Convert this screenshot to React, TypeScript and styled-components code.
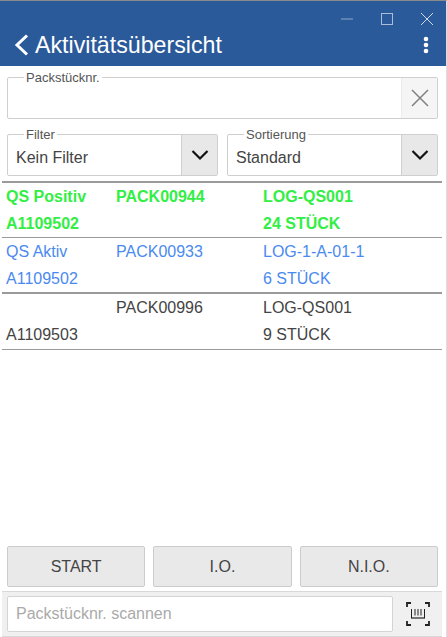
import React from 'react';
import styled, { createGlobalStyle } from 'styled-components';

const GlobalStyle = createGlobalStyle`
  html, body {
    margin: 0;
    padding: 0;
    background: #ffffff;
  }
  body {
    font-family: 'Liberation Sans', Arial, sans-serif;
    color: #444444;
  }
`;

const Page = styled.div`
  width: 447px;
  height: 637px;
  display: flex;
  flex-direction: column;
  overflow: hidden;
  background: #fff;
  border-top: 1px solid #8a8a8a;
  border-right: 1px solid #dddddd;
  box-sizing: border-box;
`;

const Header = styled.header`
  background: #2a5a99;
  height: 65px;
  flex-shrink: 0;
  display: flex;
  flex-direction: column;
  padding: 0 3px 0 14px;
  color: #fff;
`;

const WindowBar = styled.div`
  height: 30px;
  display: flex;
  justify-content: flex-end;
  align-items: center;
  padding-top: 6px;
  gap: 26px;
  padding-right: 9px;
  box-sizing: border-box;
`;

const TitleBar = styled.div`
  display: flex;
  align-items: center;
  height: 28px;
  padding-right: 11px;
`;

const Title = styled.h1`
  flex: 1;
  margin: 0 0 0 6px;
  font-size: 23.2px;
  font-weight: 400;
  color: #fff;
  font-family: 'Liberation Sans', Arial, sans-serif;
`;

const Content = styled.main`
  flex: 1;
  display: flex;
  flex-direction: column;
  padding: 0 4px 0 2px;
  min-height: 0;
`;

const FieldRow = styled.div<{ $top: number }>`
  display: flex;
  gap: 9px;
  padding: 0 4px 0 5px;
  margin-top: ${(p) => p.$top}px;
`;

const Field = styled.div`
  position: relative;
  flex: 1;
  height: 42px;
  box-sizing: border-box;
  border: 1px solid #cfcfcf;
  border-radius: 2px;
  display: flex;
  background: #fff;
`;

const Legend = styled.span`
  position: absolute;
  top: -8px;
  left: 16px;
  padding: 0 2px;
  background: #fff;
  font-size: 13px;
  line-height: 15px;
  color: #555;
`;

const FieldValue = styled.div`
  flex: 1;
  padding: 13px 0 0 8px;
  font-size: 16px;
  line-height: 20px;
  color: #444;
`;

const FieldButton = styled.div<{ $light?: boolean }>`
  width: 35px;
  flex-shrink: 0;
  display: flex;
  align-items: center;
  justify-content: center;
  background: ${(p) => (p.$light ? '#f5f5f5' : '#e8e8e8')};
  border-left: 1px solid ${(p) => (p.$light ? '#ececec' : '#cfcfcf')};
`;

const List = styled.div`
  margin-top: 5px;
  padding: 0;
  flex: 1;
  border-top: 2px solid #9a9a9a;
`;

const Row = styled.div<{ $color: string; $bold?: boolean; $thick?: boolean; $height: number }>`
  display: grid;
  grid-template-columns: 110px 147px 1fr;
  grid-auto-rows: 27px;
  padding: 0 0 0 4px;
  height: ${(p) => p.$height}px;
  box-sizing: border-box;
  border-bottom: ${(p) => (p.$thick ? 2 : 1)}px solid #9a9a9a;
  color: ${(p) => p.$color};
  font-weight: ${(p) => (p.$bold ? 700 : 400)};
  font-size: 16px;
  line-height: 27px;
`;

const Cell = styled.span`
  white-space: nowrap;
`;

const Actions = styled.div`
  display: flex;
  gap: 8px;
  padding: 0 4px 4px 5px;
  border-bottom: 1px solid #d8d8d8;
`;

const ActionButton = styled.button`
  flex: 1;
  height: 41px;
  padding: 0;
  background: #e9e9e9;
  border: 1px solid #cccccc;
  border-radius: 2px;
  font-family: 'Liberation Sans', Arial, sans-serif;
  font-size: 16px;
  color: #444;
`;

const ScanBar = styled.div`
  display: flex;
  align-items: center;
  height: 45px;
  flex-shrink: 0;
  box-sizing: border-box;
  padding: 0 0 0 5px;
  background: #f0f0f0;
  border-bottom: 1px solid #d8d8d8;
`;

const ScanInput = styled.div`
  width: 386px;
  height: 36px;
  box-sizing: border-box;
  border: 1px solid #d4d4d4;
  border-radius: 2px;
  background: #fff;
  padding-left: 8px;
  font-size: 16px;
  line-height: 34px;
  color: #aaaaaa;
`;

const ScanIcon = styled.div`
  flex: 1;
  display: flex;
  justify-content: center;
`;

const rows = [
  { color: '#33ee44', bold: true, thick: false, height: 55, cells: ['QS Positiv', 'PACK00944', 'LOG-QS001', 'A1109502', '', '24 STÜCK'] },
  { color: '#4a8af0', bold: false, thick: true, height: 56, cells: ['QS Aktiv', 'PACK00933', 'LOG-1-A-01-1', 'A1109502', '', '6 STÜCK'] },
  { color: '#444444', bold: false, thick: false, height: 56, cells: ['', 'PACK00996', 'LOG-QS001', 'A1109503', '', '9 STÜCK'] },
];

const Chevron = () => (
  <svg width="18" height="12" viewBox="0 0 18 12">
    <path d="M1.500 2l7.500 7.500L16.500 2" fill="none" stroke="#111" strokeWidth="2.200" />
  </svg>
);

export default function App() {
  return (
    <>
      <GlobalStyle />
      <Page>
        <Header>
          <WindowBar>
            <svg width="14" height="14" viewBox="0 0 14 14"><path d="M1 7h12" stroke="#8fa9cb" strokeWidth="1" /></svg>
            <svg width="14" height="14" viewBox="0 0 14 14"><rect x="1.500" y="1.500" width="11" height="11" fill="none" stroke="#a9bdd8" strokeWidth="1" /></svg>
            <svg width="14" height="14" viewBox="0 0 14 14"><path d="M1 1l12 12M13 1L1 13" stroke="#d0dbea" strokeWidth="1" /></svg>
          </WindowBar>
          <TitleBar>
            <svg width="15" height="22" viewBox="0 0 15 22"><path d="M13 1.500L3 11l10 9.500" fill="none" stroke="#fff" strokeWidth="3" /></svg>
            <Title>Aktivitätsübersicht</Title>
            <svg width="12" height="20" viewBox="0 0 12 20">
              <circle cx="6" cy="4" r="2.300" fill="#fff" />
              <circle cx="6" cy="10" r="2.300" fill="#fff" />
              <circle cx="6" cy="16" r="2.300" fill="#fff" />
            </svg>
          </TitleBar>
        </Header>
        <Content>
          <FieldRow $top={11}>
            <Field>
              <Legend>Packstücknr.</Legend>
              <FieldValue />
              <FieldButton $light>
                <svg width="18" height="18" viewBox="0 0 18 18"><path d="M1 1l16 16M17 1L1 17" stroke="#808080" strokeWidth="1.500" /></svg>
              </FieldButton>
            </Field>
          </FieldRow>
          <FieldRow $top={15}>
            <Field>
              <Legend>Filter</Legend>
              <FieldValue>Kein Filter</FieldValue>
              <FieldButton>
                <Chevron />
              </FieldButton>
            </Field>
            <Field>
              <Legend>Sortierung</Legend>
              <FieldValue>Standard</FieldValue>
              <FieldButton>
                <Chevron />
              </FieldButton>
            </Field>
          </FieldRow>
          <List>
            {rows.map((r) => (
              <Row key={r.cells[1]} $color={r.color} $bold={r.bold} $thick={r.thick} $height={r.height}>
                {r.cells.map((c, i) => (
                  <Cell key={i}>{c}</Cell>
                ))}
              </Row>
            ))}
          </List>
          <Actions>
            <ActionButton>START</ActionButton>
            <ActionButton>I.O.</ActionButton>
            <ActionButton>N.I.O.</ActionButton>
          </Actions>
          <ScanBar>
            <ScanInput>Packstücknr. scannen</ScanInput>
            <ScanIcon>
              <svg width="26" height="26" viewBox="0 0 26 26" fill="none" stroke="#222">
                <path d="M2 6V2h4M20 2h4v4M2 20v4h4M24 20v4h-4" strokeWidth="1.800" />
                <path d="M6 17h14" strokeWidth="1.200" />
                <path d="M6.500 8v9M19.500 8v9M10 8v6.500M13 8v6.500M16 8v6.500" strokeWidth="1" />
              </svg>
            </ScanIcon>
          </ScanBar>
        </Content>
      </Page>
    </>
  );
}
